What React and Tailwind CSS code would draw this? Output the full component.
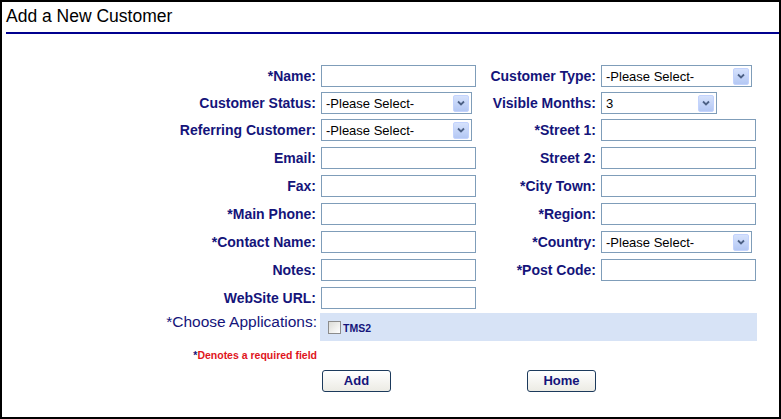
import React from "react";

const LABEL = "font-['Liberation_Sans',Arial,sans-serif] font-bold text-[14px] text-[#14147a]";

function Label({ children }) {
  return (
    <div className={`h-[22px] flex items-center justify-end pr-[5px] whitespace-nowrap ${LABEL}`}>
      {children}
    </div>
  );
}

function TextBox() {
  return <div className="h-[22px] w-[155px] border border-[#7f9db9] bg-white" />;
}

function Select({ value, w = "w-[151px]" }) {
  return (
    <div className={`h-[22px] ${w} border border-[#7f9db9] bg-white flex items-center pl-[4px] pr-[2px]`}>
      <span className="flex-1 font-['Liberation_Sans',Arial,sans-serif] text-[13px] text-black leading-none whitespace-nowrap">
        {value}
      </span>
      <span className="h-[17px] w-[16px] rounded-[2px] bg-gradient-to-b from-[#d6e2fc] to-[#b4c8f4] border border-[#c3d3fd] flex items-center justify-center">
        <svg width="8" height="6" viewBox="0 0 8 6">
          <path d="M1 1.5 L4 4.5 L7 1.5" stroke="#4d6185" strokeWidth="1.8" fill="none" />
        </svg>
      </span>
    </div>
  );
}

function Row({ h = "h-[28px]", children }) {
  return <div className={`grid grid-cols-[319px_160px_120px_1fr] ${h}`}>{children}</div>;
}

function Button({ children }) {
  return (
    <div className="h-[22px] w-[69px] rounded-[3px] border border-[#1c3a5c] bg-gradient-to-b from-white to-[#ecebe4] flex items-center justify-center font-['Liberation_Sans',Arial,sans-serif] font-bold text-[13px] text-[#14147a]">
      {children}
    </div>
  );
}

export default function App() {
  return (
    <div className="w-[781px] h-[419px] border-2 border-black bg-white">
      <div className="pl-[4px] pt-[3px] h-[30px] font-['Liberation_Sans',Arial,sans-serif] text-[17.5px] text-black leading-[22px]">
        Add a New Customer
      </div>
      <div className="ml-[4px] h-[2px] bg-[#00008f]" />

      <div className="mt-[31px]">
        <Row h="h-[27px]">
          <Label>*Name:</Label>
          <TextBox />
          <Label>Customer Type:</Label>
          <Select value="-Please Select-" />
        </Row>
        <Row h="h-[27px]">
          <Label>Customer Status:</Label>
          <Select value="-Please Select-" />
          <Label>Visible Months:</Label>
          <Select value="3" w="w-[116px]" />
        </Row>
        <Row>
          <Label>Referring Customer:</Label>
          <Select value="-Please Select-" />
          <Label>*Street 1:</Label>
          <TextBox />
        </Row>
        <Row>
          <Label>Email:</Label>
          <TextBox />
          <Label>Street 2:</Label>
          <TextBox />
        </Row>
        <Row>
          <Label>Fax:</Label>
          <TextBox />
          <Label>*City Town:</Label>
          <TextBox />
        </Row>
        <Row>
          <Label>*Main Phone:</Label>
          <TextBox />
          <Label>*Region:</Label>
          <TextBox />
        </Row>
        <Row>
          <Label>*Contact Name:</Label>
          <TextBox />
          <Label>*Country:</Label>
          <Select value="-Please Select-" />
        </Row>
        <Row>
          <Label>Notes:</Label>
          <TextBox />
          <Label>*Post Code:</Label>
          <TextBox />
        </Row>
        <Row h="h-[26px]">
          <Label>WebSite URL:</Label>
          <TextBox />
        </Row>

        <div className="grid grid-cols-[318px_1fr] h-[28px]">
          <div className="pr-[3px] text-right font-['Liberation_Sans',Arial,sans-serif] text-[15.5px] leading-[17px] text-[#14147a] whitespace-nowrap">
            *Choose Applications:
          </div>
          <div className="w-[437px] h-[28px] bg-[#d7e3f6] flex items-end pl-[8px] pb-[7px] gap-[2px]">
            <span className="w-[13px] h-[13px] border border-[#8c8c8c] bg-gradient-to-br from-[#dcdcd7] to-white" />
            <span className="font-['Liberation_Sans',Arial,sans-serif] font-bold text-[10.5px] leading-[11px] text-[#14147a]">
              TMS2
            </span>
          </div>
        </div>

        <div className="grid grid-cols-[319px_1fr] h-[29px] items-center">
          <div className="pr-[4px] text-right font-['Liberation_Sans',Arial,sans-serif] font-bold text-[10.5px] whitespace-nowrap">
            <span className="text-[#14147a]">*</span>
            <span className="text-[#e0141c]">Denotes a required field</span>
          </div>
        </div>

        <div className="flex pl-[320px] gap-[136px]">
          <Button>Add</Button>
          <Button>Home</Button>
        </div>
      </div>
    </div>
  );
}
